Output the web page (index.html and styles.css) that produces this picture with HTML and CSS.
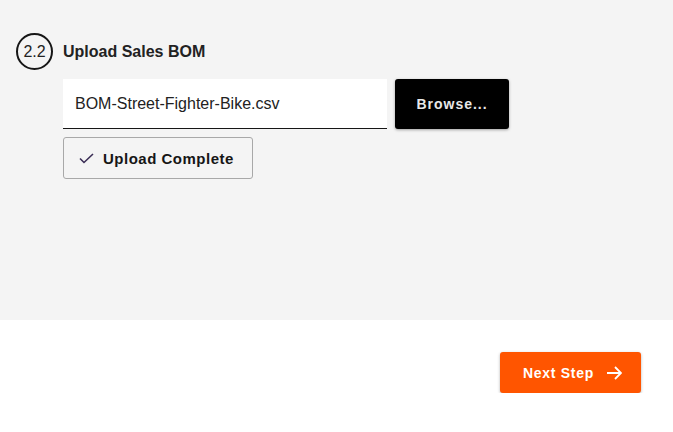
FILE: index.html
```html
<!DOCTYPE html>
<html>
<head>
<meta charset="utf-8">
<link rel="stylesheet" href="styles.css">
</head>
<body>
<div class="panel">
  <div class="step-head">
    <div class="step-num">2.2</div>
    <div class="step-title">Upload Sales BOM</div>
  </div>
  <div class="step-body">
    <div class="file-row">
      <div class="file-input">BOM-Street-Fighter-Bike.csv</div>
      <button class="browse">Browse...</button>
    </div>
    <button class="status">
      <svg width="15" height="11" viewBox="0 0 15 11"><path d="M1 5.5 L5 9.5 L14 1" fill="none" stroke="#3a2d55" stroke-width="1.6"/></svg>
      <span>Upload Complete</span>
    </button>
  </div>
</div>
<div class="footer">
  <button class="next">Next Step
    <svg width="16" height="14" viewBox="0 0 16 14"><path d="M1 7 H15 M9 1 L15 7 L9 13" fill="none" stroke="#fff" stroke-width="1.8"/></svg>
  </button>
</div>
</body>
</html>
```
FILE: styles.css
```css
* { box-sizing: border-box; }
body {
  margin: 0;
  font-family: "Liberation Sans", Arial, sans-serif;
  color: #161616;
  background: #fff;
}
.panel {
  background: #f4f4f4;
  height: 320px;
  padding: 33px 0 0 16px;
}
.step-head {
  display: flex;
  align-items: center;
  gap: 10px;
}
.step-num {
  width: 37px;
  height: 37px;
  border: 2px solid #161616;
  border-radius: 50%;
  display: flex;
  align-items: center;
  justify-content: center;
  font-size: 16px;
  color: #222;
}
.step-title {
  font-weight: bold;
  font-size: 16px;
  color: #222;
}
.step-body {
  padding: 9px 0 0 47px;
}
.file-row {
  display: flex;
  gap: 8px;
}
.file-input {
  width: 324px;
  height: 50px;
  background: #fff;
  border-bottom: 1px solid #161616;
  display: flex;
  align-items: center;
  padding-left: 12px;
  font-size: 16px;
  color: #222;
}
.browse {
  width: 114px;
  height: 50px;
  background: #000;
  color: #e8e8e8;
  border: none;
  border-radius: 3px;
  font-family: inherit;
  font-weight: bold;
  font-size: 14px;
  letter-spacing: 1px;
  box-shadow: 0 1px 3px rgba(0,0,0,0.35);
}
.status {
  margin-top: 8px;
  width: 190px;
  height: 42px;
  border: 1px solid #a8a8a8;
  border-radius: 3px;
  background: #f4f4f4;
  display: flex;
  align-items: center;
  gap: 9px;
  padding: 0 0 0 15px;
  font-family: inherit;
  font-weight: bold;
  font-size: 15px;
  letter-spacing: 0.5px;
  color: #161616;
}
.footer {
  display: flex;
  justify-content: flex-end;
  padding: 32px 32px 0 0;
}
.next {
  width: 141px;
  height: 41px;
  background: #ff5500;
  color: #fff;
  border: none;
  border-radius: 3px;
  font-family: inherit;
  font-weight: bold;
  font-size: 14px;
  letter-spacing: 0.7px;
  display: flex;
  align-items: center;
  justify-content: center;
  gap: 12px;
  padding: 0 0 0 4px;
  box-shadow: 0 1px 3px rgba(0,0,0,0.3);
}
```
